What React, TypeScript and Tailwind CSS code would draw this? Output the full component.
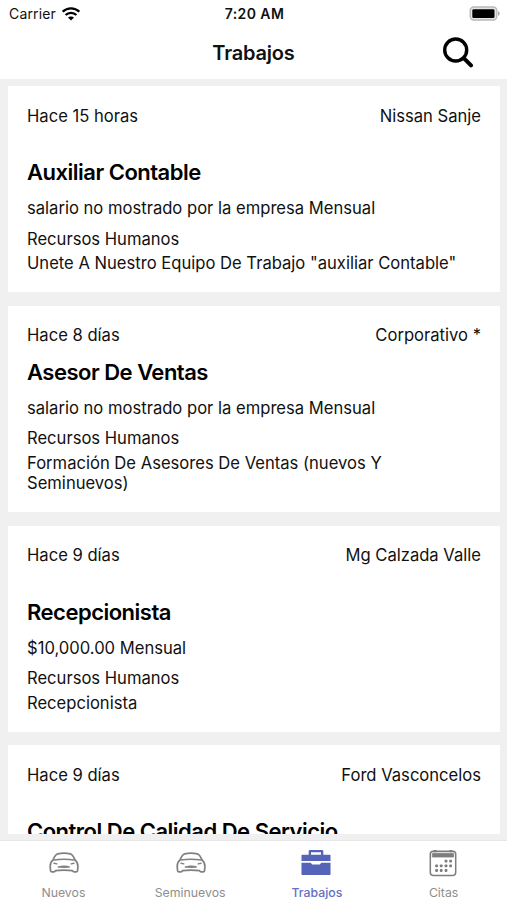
const jobs = [
  {
    time: 'Hace 15 horas',
    company: 'Nissan Sanje',
    title: 'Auxiliar Contable',
    salary: 'salario no mostrado por la empresa Mensual',
    area: 'Recursos Humanos',
    description: 'Unete A Nuestro Equipo De Trabajo "auxiliar Contable"',
  },
  {
    time: 'Hace 8 días',
    company: 'Corporativo *',
    title: 'Asesor De Ventas',
    salary: 'salario no mostrado por la empresa Mensual',
    area: 'Recursos Humanos',
    description: 'Formación De Asesores De Ventas (nuevos Y Seminuevos)',
    compact: true,
  },
  {
    time: 'Hace 9 días',
    company: 'Mg Calzada Valle',
    title: 'Recepcionista',
    salary: '$10,000.00 Mensual',
    area: 'Recursos Humanos',
    description: 'Recepcionista',
  },
  {
    time: 'Hace 9 días',
    company: 'Ford Vasconcelos',
    title: 'Control De Calidad De Servicio',
  },
];

const tabs = [
  { label: 'Nuevos', icon: CarIcon },
  { label: 'Seminuevos', icon: CarIcon },
  { label: 'Trabajos', icon: BriefcaseIcon, active: true },
  { label: 'Citas', icon: CalendarIcon },
];

function WifiIcon() {
  return (
    <svg width="18" height="14" viewBox="0 0 18 14" fill="none" stroke="#000" strokeWidth="2.3">
      <path d="M.6 4.7C5.4.2 12.6.2 17.4 4.7" />
      <path d="M3.6 8c2.9-2.9 7.9-2.9 10.8 0" />
      <path d="M9 13.6 6 10.6c1.6-1.6 4.4-1.6 6 0z" fill="#000" stroke="none" />
    </svg>
  );
}

function BatteryIcon() {
  return (
    <svg width="32" height="16" viewBox="0 0 32 16">
      <rect x="1.2" y="1" width="26.6" height="13" rx="3.5" fill="#e4e4e4" stroke="#b9b9b9" strokeWidth="1.4" />
      <rect x="3.3" y="3.2" width="22.2" height="8.8" rx="1.3" fill="#000" />
      <path d="M29 5.2c2.2.7 2.2 3.9 0 4.6z" fill="#a8a8a8" />
    </svg>
  );
}

function SearchIcon() {
  return (
    <svg width="32" height="32" viewBox="0 0 32 32" fill="none" stroke="#000" strokeLinecap="round">
      <circle cx="13.7" cy="14" r="11" strokeWidth="3.4" />
      <path d="M22 22.4 29 29.4" strokeWidth="4" />
    </svg>
  );
}

function CarIcon() {
  return (
    <svg className="ml-[2px]" width="30" height="28" viewBox="0 0 30 28" fill="none" stroke="#808080" strokeWidth="1.7" strokeLinejoin="round" strokeLinecap="round">
      <path d="M4 10.9C5.4 7.6 6.8 5.2 8.6 4.8c3.9-.8 8.9-.8 12.8 0 1.8.4 3.2 2.8 4.6 6.1 2.4 2 3 3.9 2.9 6.7l-.4 4.2c-.1.7-.6 1-1.4 1h-2c-.8 0-1.2-.3-1.6-1.2-5.2-.6-11.8-.6-17 0-.4.9-.8 1.2-1.6 1.2H3c-.8 0-1.3-.3-1.4-1l-.4-4.2C1.1 14.8 1.6 12.9 4 10.9z" />
      <path d="M4.6 11c6.8-1 14-1 20.8 0" strokeWidth="1.5" />
      <path d="M5 14.2l2.8.7M25 14.2l-2.8.7" strokeWidth="1.4" />
      <path d="M9.3 18c3.5-1.4 7.9-1.4 11.4 0-3.4.6-8 .6-11.4 0z" fill="#808080" strokeWidth="1" />
    </svg>
  );
}

function BriefcaseIcon() {
  return (
    <svg className="mr-[1px]" width="30" height="28" viewBox="0 0 30 28" fill="#5563b8">
      <path d="M7.7 5.7V2.3Q7.7 1 9 1h12q1.3 0 1.3 1.3v3.4h6.4q.8 0 .8.8v5.6H.5V6.5q0-.8.8-.8zM10 5.7h10V3.2H10z" fillRule="evenodd" />
      <path d="M.5 13.7h9.3l1.3 1.8h7.8l1.3-1.8h9.3v11.5q0 .8-.8.8H1.3q-.8 0-.8-.8z" />
    </svg>
  );
}

function CalendarIcon() {
  const dots = [
    [18, 12.1], [22.6, 12.1],
    [8.6, 16.8], [13.2, 16.8], [18, 16.8], [22.6, 16.8],
    [8.6, 21.5], [13.2, 21.5], [18, 21.5],
  ];

  return (
    <svg className="mr-[1px]" width="30" height="28" viewBox="0 0 30 28" fill="#7d7d7d">
      <path d="M3.5 8V4q0-1.8 1.8-1.8h19.4q1.8 0 1.8 1.8v4z" fill="#dcdcdc" />
      <rect x="2.3" y="2.2" width="25.4" height="24.2" rx="2.8" fill="none" stroke="#7d7d7d" strokeWidth="1.5" />
      <rect x="4.2" y="4.2" width="21.6" height="4.2" />
      <rect x="5.6" y="1" width="3" height="2.2" rx=".6" />
      <rect x="21.4" y="1" width="3" height="2.2" rx=".6" />
      {dots.map(([x, y], index) => (
        <rect key={index} x={x - 1.4} y={y - 1.4} width="2.8" height="2.8" rx=".8" />
      ))}
    </svg>
  );
}

export default function App() {
  return (
    <div className="flex h-[900px] w-[507px] flex-col overflow-hidden bg-[#f0f0f0] font-['Inter',sans-serif] text-[#111]">
      {/* Status bar */}
      <div className="grid h-7 shrink-0 grid-cols-[1fr_auto_1fr] items-center bg-white pl-[9px] pr-[7px] text-sm">
        <div className="flex items-center gap-1.5 tracking-[0.15px]">
          <span>Carrier</span>
          <WifiIcon />
        </div>
        <span className="text-center font-semibold tracking-[0.4px]">7:20 AM</span>
        <div className="-mr-[1px] flex justify-end">
          <BatteryIcon />
        </div>
      </div>

      {/* Header */}
      <header className="grid h-[51px] shrink-0 grid-cols-[1fr_auto_1fr] items-center bg-white px-[33px] pb-[3px]">
        <span />
        <h1 className="pt-px text-xl font-semibold tracking-[-0.2px]">Trabajos</h1>
        <button className="justify-self-end">
          <SearchIcon />
        </button>
      </header>

      {/* Job list */}
      <main className="mt-[7px] flex h-[748px] shrink-0 flex-col gap-[13.4px] overflow-hidden pr-[7px] pl-2">
        {jobs.map((job, index) => (
          <article key={index} className="h-[206.4px] shrink-0 bg-white px-[19px] pt-[19.6px] text-[16.6px] leading-[20.5px]">
            <div className="flex justify-between">
              <span>{job.time}</span>
              <span>{job.company}</span>
            </div>
            <h2 className={`text-[22px] leading-7 font-semibold tracking-[-0.5px] text-black ${job.compact ? 'mt-[11.8px]' : 'mt-8'}`}>
              {job.title}
            </h2>
            {job.salary && (
              <div className="pt-3">
                <p className="mb-[10px]">{job.salary}</p>
                <p className="mb-1">{job.area}</p>
                <p className="max-w-[440px]">{job.description}</p>
              </div>
            )}
          </article>
        ))}
      </main>

      {/* Tab bar */}
      <nav className="mt-auto grid h-[60px] shrink-0 grid-cols-4 border-t border-[#e6e6e6] bg-white">
        {tabs.map(({ label, icon: Icon, active }) => (
          <div key={label} className={`flex flex-col items-center pt-2 text-[12.3px] ${active ? 'font-medium text-[#6670c4]' : 'text-[#8e8e8e]'}`}>
            <Icon />
            <span className="mt-2 leading-4">{label}</span>
          </div>
        ))}
      </nav>
    </div>
  );
}
